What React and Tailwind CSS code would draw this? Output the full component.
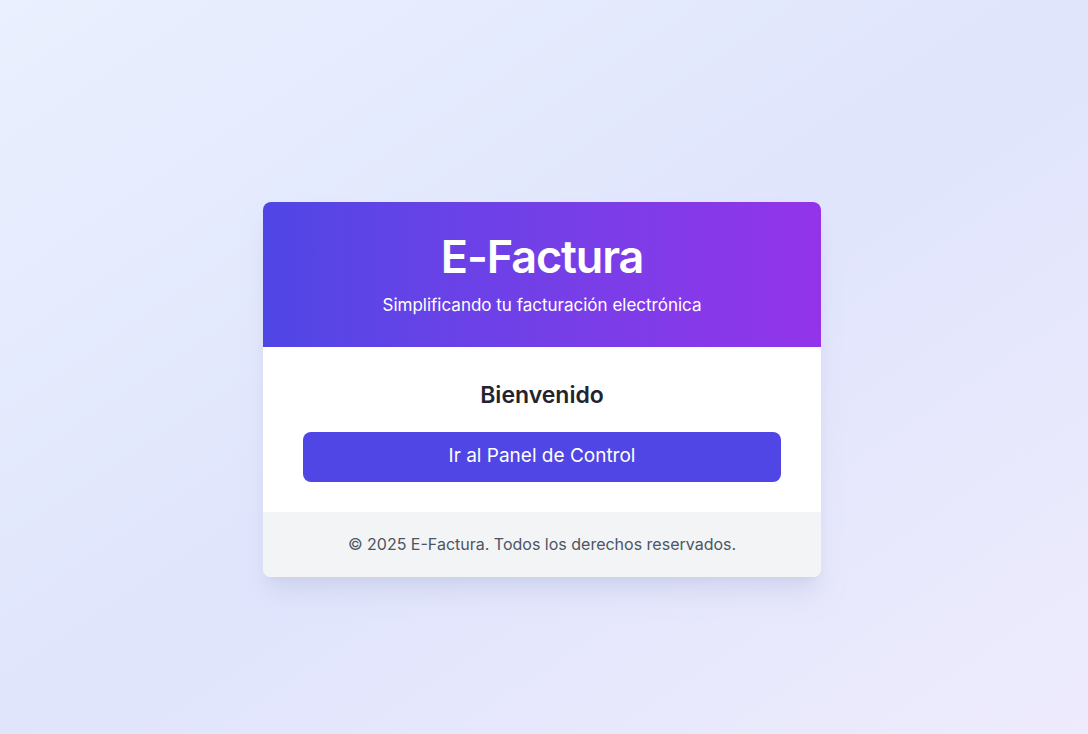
import React from 'react';

function App() {
    return (
        <div
            className="min-h-screen w-full flex items-center justify-center pt-[44px] pr-[4px] bg-gradient-to-br from-[#eaf0fe] via-[#e0e5fc] to-[#eeebfd]"
            style={{ fontFamily: 'Inter, "Noto Sans", sans-serif' }}
        >
            <div className="w-[558px] rounded-lg overflow-hidden bg-white shadow-xl shadow-[#c7cbe8]/60">
                <div className="bg-gradient-to-r from-[#4f46e5] to-[#9333ea] text-white text-center pt-[31px] pb-[28px]">
                    <h1 className="text-[45px] leading-[48px] font-semibold tracking-tight">E-Factura</h1>
                    <p className="mt-[10px] text-[17px] leading-[28px]">Simplificando tu facturación electrónica</p>
                </div>

                <div className="px-10 pt-[32px] pb-[30px] text-center">
                    <h2 className="text-[23px] leading-[32px] font-semibold text-[#1f2430]">Bienvenido</h2>
                    <button
                        type="button"
                        className="mt-[21px] w-full h-[50px] rounded-lg bg-[#4f46e5] text-white text-[19px] hover:bg-indigo-700"
                    >
                        Ir al Panel de Control
                    </button>
                </div>

                <div className="bg-[#f3f4f6] h-[65px] flex items-center justify-center">
                    <p className="text-[16px] text-[#4b5563]">© 2025 E-Factura. Todos los derechos reservados.</p>
                </div>
            </div>
        </div>
    );
}

export default App;
